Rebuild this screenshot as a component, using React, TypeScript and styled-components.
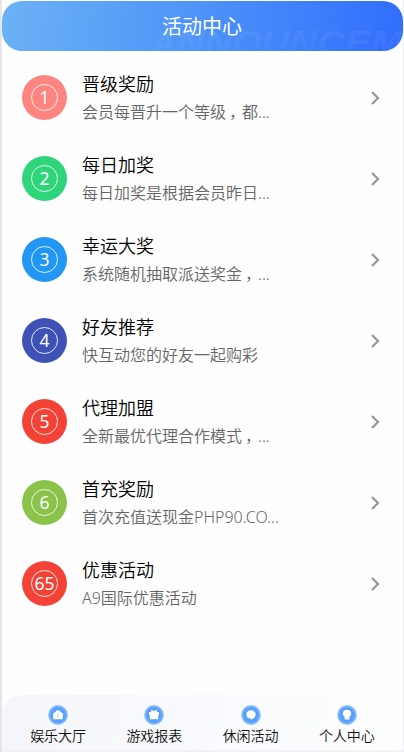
import React from "react";
import styled, { createGlobalStyle } from "styled-components";

const Global = createGlobalStyle`
  * { box-sizing: border-box; }
  body {
    margin: 0;
    background: #fff;
    font-family: "Noto Sans", "Noto Sans CJK SC", sans-serif;
    font-weight: 300;
    overflow: hidden;
  }
`;

const Screen = styled.div`
  display: flex;
  flex-direction: column;
  width: 404px;
  height: 752px;
  padding-top: 1px;
  border-left: 2px solid #e6e6e8;
  border-right: 1px solid #edf1f6;
  background: #fefefe;
`;

const Header = styled.header`
  position: relative;
  display: flex;
  align-items: center;
  justify-content: center;
  height: 50px;
  flex: none;
  overflow: hidden;
  border-radius: 20px;
  background: linear-gradient(100deg, #6cb2f5 0%, #5198f8 42%, #306dfd 100%);
`;

const Watermark = styled.span`
  position: absolute;
  left: 147px;
  top: 21px;
  font: italic bold 34px/40px "Liberation Sans", sans-serif;
  letter-spacing: 0;
  transform: scaleX(1.13);
  transform-origin: left;
  white-space: nowrap;
  color: transparent;
  background: linear-gradient(180deg, rgba(255, 255, 255, 0.075), rgba(255, 255, 255, 0.03) 80%);
  background-clip: text;
`;

const Heading = styled.h1`
  position: relative;
  margin: 2px 1px 0 0;
  font-size: 20px;
  line-height: 30px;
  font-weight: 400;
  color: #fff;
`;

const List = styled.main`
  flex: 1;
  padding-top: 6px;
`;

const Row = styled.article`
  display: flex;
  align-items: center;
  height: 81px;
  padding: 0 20px;
`;

const Badge = styled.div<{ $color: string }>`
  display: grid;
  place-items: center;
  width: 45px;
  height: 45px;
  flex: none;
  border-radius: 50%;
  background: ${(p) => p.$color};
`;

const Ring = styled.span`
  display: flex;
  align-items: center;
  justify-content: center;
  width: 27px;
  height: 27px;
  border: 1px solid rgba(255, 255, 255, 0.85);
  border-radius: 50%;
  font-size: 17.5px;
  line-height: 25px;
  font-weight: 400;
  color: #fff;
`;

const Copy = styled.div`
  flex: 1;
  margin-left: 15px;
  padding-top: 1px;
`;

const Title = styled.h2`
  margin: 0;
  font-size: 18px;
  line-height: 28px;
  font-weight: 350;
  color: #000;
`;

const Description = styled.p`
  margin: 0;
  font-size: 16px;
  line-height: 28px;
  white-space: nowrap;
  font-weight: 350;
  color: #666;
`;

const Comma = styled.span`
  display: inline-block;
  width: 16px;
  line-height: 16px;
  padding-left: 3px;
`;

const Chevron = styled.svg`
  width: 10px;
  height: 14px;
  margin: 0 3px 0 0;
  fill: none;
  stroke: #969696;
  stroke-width: 2.2;
`;

const TabBar = styled.nav`
  display: flex;
  height: 57px;
  flex: none;
  padding: 10px 8px 0;
  border-radius: 20px 20px 0 0;
  border-bottom: 2px solid #f0f2f5;
  background: linear-gradient(100deg, #f4f6fb, #fdfeff);
`;

const Tab = styled.a`
  display: flex;
  flex: 1;
  flex-direction: column;
  align-items: center;
  font-size: 14px;
  line-height: 22px;
  font-weight: 350;
  color: #111;
`;

const TabIcon = styled.svg`
  display: block;
  width: 20px;
  height: 20px;
`;

const activities = [
  { id: 1, color: "#ff8680", title: "晋级奖励", text: "会员每晋升一个等级，都..." },
  { id: 2, color: "#2fd57a", title: "每日加奖", text: "每日加奖是根据会员昨日..." },
  { id: 3, color: "#2196f3", title: "幸运大奖", text: "系统随机抽取派送奖金，..." },
  { id: 4, color: "#3f51b5", title: "好友推荐", text: "快互动您的好友一起购彩" },
  { id: 5, color: "#f44336", title: "代理加盟", text: "全新最优代理合作模式，..." },
  { id: 6, color: "#8bc34a", title: "首充奖励", text: "首次充值送现金PHP90.CO..." },
  { id: 65, color: "#f44336", title: "优惠活动", text: "A9国际优惠活动" },
];

const tabs = [
  {
    label: "娱乐大厅",
    glyph: (
      <>
        <path d="M5.2 8.2 7.5 7 8.2 5.4h3.6l.7 1.6 2.3 1.2v6H5.2Z" fill="#fff" />
        <path d="M10 8v1.2M10 10.6v2" stroke="#8db9f8" strokeWidth="1" />
      </>
    ),
  },
  {
    label: "游戏报表",
    glyph: (
      <path d="M5 7h2.4l-.8-1.5L8 5l2 1.2L12 5l1.4.5-.8 1.5H15v3h-.8v4.2H5.8V10H5Z" fill="#fff" />
    ),
  },
  {
    label: "休闲活动",
    glyph: <path d="M10 5.2c2.8 0 4.6 1.8 4.6 4.2 0 1.9-1.1 3.3-2.6 4.1l-1.6 1.2-.7-1.1c-2.7-.2-4.3-1.8-4.3-4.2S7.2 5.2 10 5.2Z" fill="#fff" />,
  },
  {
    label: "个人中心",
    glyph: <path d="M10 4.8c2.6 0 4.2 1.5 4.2 3.7 0 1.6-.8 2.5-1.8 3.3v2.8H7.6v-2.8c-1-.8-1.8-1.7-1.8-3.3 0-2.2 1.6-3.7 4.2-3.7Z" fill="#fff" />,
  },
];

function splitCommas(text: string) {
  return text.split("，").map((part, i) => (
    <React.Fragment key={i}>
      {i > 0 && <Comma>，</Comma>}
      {part}
    </React.Fragment>
  ));
}

export default function App() {
  return (
    <>
      <Global />
      <Screen>
        <Header>
          <Watermark aria-hidden="true">ANNOUNCEM</Watermark>
          <Heading>活动中心</Heading>
        </Header>
        <List>
          {activities.map((a) => (
            <Row key={a.id}>
              <Badge $color={a.color}>
                <Ring>{a.id}</Ring>
              </Badge>
              <Copy>
                <Title>{a.title}</Title>
                <Description>{splitCommas(a.text)}</Description>
              </Copy>
              <Chevron viewBox="0 0 10 14">
                <path d="m2 1 6 6-6 6" />
              </Chevron>
            </Row>
          ))}
        </List>
        <TabBar>
          {tabs.map((t) => (
            <Tab key={t.label}>
              <TabIcon viewBox="0 0 20 20">
                <defs>
                  <radialGradient id="disc">
                    <stop offset="0" stopColor="#5ba5fb" />
                    <stop offset="0.7" stopColor="#569ff8" />
                    <stop offset="1" stopColor="#9cc8f8" />
                  </radialGradient>
                </defs>
                <circle cx="10" cy="10" r="9.9" fill="url(#disc)" />
                {t.glyph}
              </TabIcon>
              {t.label}
            </Tab>
          ))}
        </TabBar>
      </Screen>
    </>
  );
}
